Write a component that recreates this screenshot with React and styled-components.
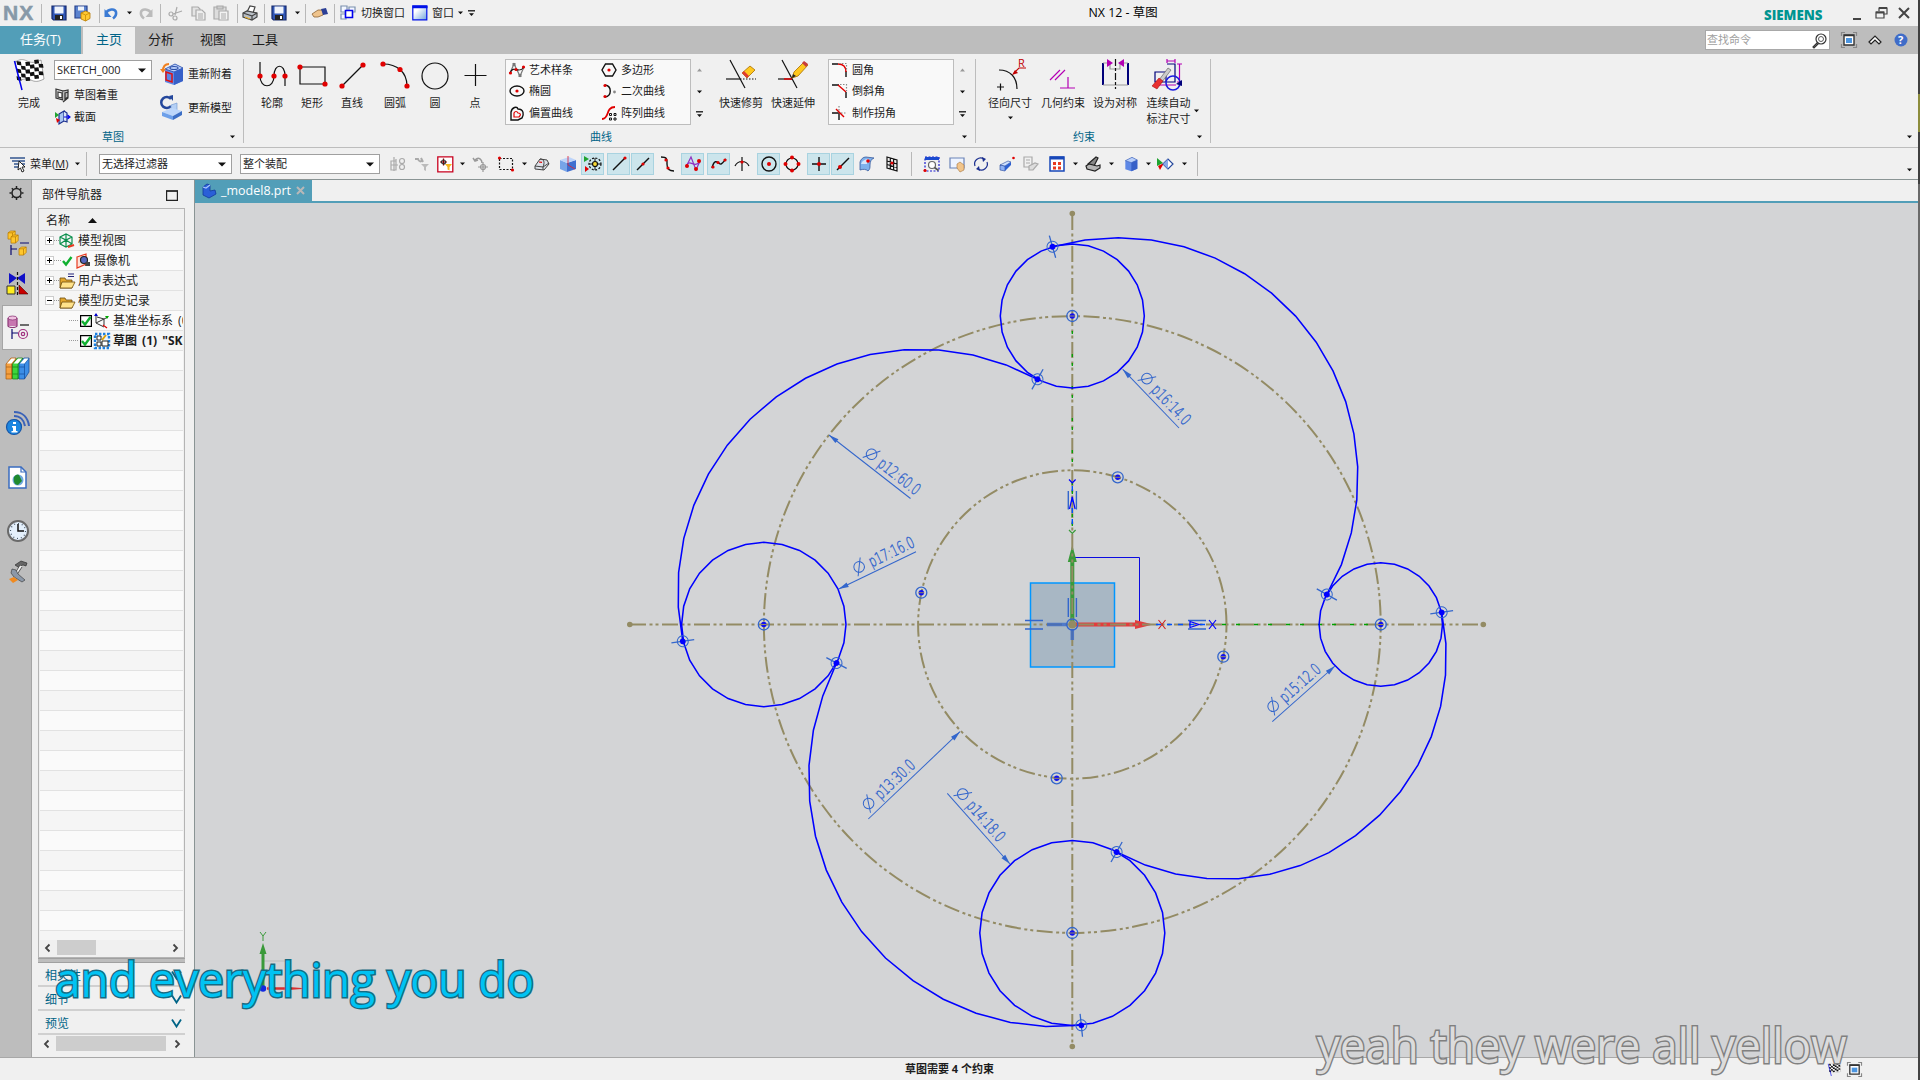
import React from "react";
import styled, { createGlobalStyle, css } from "styled-components";

const Global = createGlobalStyle`
  * { box-sizing: border-box; }
  body { margin: 0; overflow: hidden; background: #f0f0f0; }
`;

const C = {
  bg: "#f0f0f0",
  gray: "#bdbdbd",
  teal: "#529eb8",
  link: "#006487",
  canvas: "#d3d4d6",
  khaki: "#938b64",
  line: "#0000ff",
  dim: "#3366cc",
};

/* ---------- frame ---------- */
const Window = styled.div`
  width: 1920px;
  height: 1080px;
  display: flex;
  background: ${C.bg};
  color: #1c1c1c;
  font: 11px/16px "Open Sans", "Noto Sans CJK SC", sans-serif;
  overflow: hidden;
  position: relative;
  white-space: nowrap;
`;
const Main = styled.div`
  width: 1918px;
  display: flex;
  flex-direction: column;
`;
const Edge = styled.div`
  width: 2px;
  background: linear-gradient(#404040 94px, #8c8c3c 94px 132px, #404040 132px 184px, #6a6a6a 184px 300px, #444 300px);
`;
const Slot = styled.div`
  width: ${(p) => p.$w || 24}px;
  height: ${(p) => p.$h || 24}px;
  margin-left: ${(p) => p.$gap || 0}px;
  display: flex;
  flex: none;
  align-items: center;
  justify-content: center;
  ${(p) => p.$on && css`background: #cce5ec; border: 1px solid #a9d3e0;`}
`;
const Sep = styled.div`
  width: 1px;
  height: ${(p) => p.$h || 19}px;
  margin-left: ${(p) => p.$gap || 0}px;
  background: #b8b8b8;
  flex: none;
`;
const Label = styled.span`
  width: ${(p) => (p.$w ? p.$w + "px" : "auto")};
  margin-left: ${(p) => p.$gap || 0}px;
  flex: none;
`;
const Draw = styled.svg`
  display: block;
  flex: none;
  overflow: visible;
  fill: none;
  stroke-width: 1.2;
`;
const I = ({ w = 16, h = w, vb, children, ...r }) => (
  <Draw width={w} height={h} viewBox={vb || `0 0 ${w} ${h}`} {...r}>{children}</Draw>
);
const Caret = ({ color = "#111", bar }) => (
  <I w={7} h={bar ? 7 : 4}>
    {bar && <path d="M0 .8h7" stroke={color} strokeWidth="1.3" />}
    <path d={bar ? "M1 3.200h5L3.500 6z" : "M1 .5h5L3.500 3.300z"} fill={color} />
  </I>
);
const Drop = ({ gap, bar }) => <Slot $w={10} $gap={gap}><Caret bar={bar} /></Slot>;
const Dots = ({ at, r = 1.6 }) => at.map(([x, y], i) => <circle key={i} cx={x} cy={y} r={r} fill="#e00000" stroke="none" />);

/* ---------- icons ---------- */
const Save = () => (
  <I><path d="M1 1h14v14H2.500L1 13.500z" fill="#2f55b5" stroke="#15286b" /><path d="M3.500 1.500h9v7h-9z" fill="#eef3fb" /><path d="M4 10h8v5H4z" fill="#222" /><path d="M9 11h2v3H9z" fill="#fff" /></I>
);
const SaveAs = () => (
  <I><path d="M1 1h12v12H1z" fill="#5b83cf" stroke="#27418c" /><path d="M4 1.500h6v4H4z" fill="#eef3fb" /><path d="M7 8l4.500-2L16 8v5.500L11.500 16 7 14z" fill="#ffc933" stroke="#b87a00" strokeWidth=".8" /><path d="M7 8l4.500 2L16 8M11.500 10v6" stroke="#c98b00" strokeWidth=".8" /></I>
);
const Undo = ({ flip, color = "#3b7bd4" }) => (
  <I><g transform={flip ? "translate(16) scale(-1 1)" : undefined}><path d="M3 8c2-4 9-5 10-1 .6 3-1 5-3 6.500" stroke={color} strokeWidth="2.600" /><path d="M1.500 4v8h7z" fill={color} /></g></I>
);
const Cut = () => (
  <I stroke="#aaa" strokeWidth="1.500"><path d="M10 2L8 10M15 6L6 9" /><circle cx="4" cy="9" r="2" /><circle cx="8" cy="13" r="2" /></I>
);
const Copy = () => (
  <I stroke="#aaa"><path d="M2 2h6l2 2v7H2z" fill="#e4e4e4" /><path d="M6 5h6l3 3v7H6z" fill="#eee" /><path d="M8 9h5M8 11h5M8 13h5" /></I>
);
const Paste = () => (
  <I stroke="#aaa"><path d="M1 2h12v12H1z" fill="#ddd" /><path d="M4 1h6v3H4z" fill="#ccc" /><path d="M6 6h9v9H6z" fill="#f2f2f2" /><path d="M8 9h5M8 11h5M8 13h5" /></I>
);
const Print = () => (
  <I stroke="#444" strokeWidth="1"><path d="M5 7l3-6 5 1-2 6z" fill="#fff" /><path d="M1 8l4-2 10 2v4l-5 3-9-3z" fill="#b9bfc6" /><path d="M1 8l9 3v4M10 11l5-3" /><path d="M3 12l5 2" stroke="#e8b030" /></I>
);
const Hand = () => (
  <I><path d="M0 9l6-4 6 0-1 5-5 2-4 0z" fill="#efc48d" stroke="#8d6334" strokeWidth=".8" /><path d="M9 4l5-1 2 6-5 1z" fill="#2b3f96" /></I>
);
const Switch = () => (
  <I><path d="M1 1h6v6H1zM9 2h6v5H9zM1 9h5v5H1z" stroke="#7a8fae" fill="#f4f8ff" /><path d="M5.500 5.500h7v7h-7z" stroke="#0000ee" strokeWidth="1.600" fill="#fff" /></I>
);
const WinIcon = () => (
  <I><defs><linearGradient id="wn" x1="0" y1="0" x2="1" y2="1"><stop offset=".3" stopColor="#fff" /><stop offset="1" stopColor="#6fa3dd" /></linearGradient></defs><path d="M.8.8h14v14H.8z" fill="url(#wn)" stroke="#0011e8" /><path d="M.5 2h15" stroke="#0011e8" strokeWidth="2.500" /></I>
);
const Frame = ({ w = 16 }) => (
  <I w={w} vb="0 0 16 16"><path d="M.5 4V.5H4M12 .5h3.500V4M15.500 12v3.500H12M4 15.500H.5V12" stroke="#888" /><path d="M3 3h10v10H3z" fill="#fff" stroke="#333" strokeWidth="1.400" /><path d="M3 3.500h10" stroke="#333" strokeWidth="1.500" /><path d="M5 6h6v5H5z" fill="#4b95e0" /></I>
);
const Flag = ({ w = 31 }) => {
  const sq = [];
  for (let r = 0; r < 5; r++) for (let c = 0; c < 6; c++) if ((r + c) % 2 === 0) sq.push(`M${2 + c * 4.4} ${3 + r * 3.8 + Math.sin(c) * 1.2}l4.400 ${Math.cos(c) * 0.8}l.6 3.800l-4.400 ${-Math.cos(c) * 0.8}z`);
  return (
    <I w={w} vb="0 0 31 31">
      <path d="M1 3c5-3 8-3 12-1s8 2 14-1l3 19c-6 3-9 3-13 1s-8-1-12 1z" fill="#fff" stroke="#555" strokeWidth=".5" />
      <path d={sq.join("")} fill="#111" transform="translate(.5 -1)" />
      <path d="M.5 2l7.500 29" stroke="#0000ee" strokeWidth="1.500" />
    </I>
  );
};
const Emphasis = () => (
  <I stroke="#333" strokeWidth="1"><path d="M2 2l7 2v9l-7-2z" fill="#ddd" /><path d="M4 5l4 1v5l-4-1z" fill="#fff" /><path d="M9 4l5-1v8l-5 4M11 6l3-1v5l-3 2z" fill="#bbb" /></I>
);
const Section = () => (
  <I><path d="M5 5l5-3v10l-5 3z" fill="#a8c4f0" stroke="#1b2f8f" /><path d="M10 2l3 2v9l-3-1" stroke="#1b2f8f" fill="#d9e5fa" /><path d="M10 8h6M13.500 6l2.500 2-2.500 2" stroke="#0000ee" /><path d="M1 3l4 3-4 3z" fill="#1fa32f" /><path d="M2 9l4 2-3 3z" fill="#e00000" /></I>
);
const Cube = ({ w = 24, hook }) => (
  <I w={w} vb="0 0 24 24"><path d="M5 7l10-5 8 4v13l-9 4-9-3z" fill="#5e88e6" /><path d="M5 7l9 3 9-4-8-4z" fill="#b9cffa" stroke="#2c4fa8" strokeWidth=".8" /><path d="M14 10v13l9-4V6z" fill="#3760c8" />
    {hook && <><path d="M6 10l6 2v8l-6-2z" stroke="#e01010" strokeWidth="1.500" /><path d="M9 2C5 2 3 5 3 9" stroke="#f08020" strokeWidth="2" /><path d="M0 7l3 4 3-4z" fill="#f08020" /><ellipse cx="14" cy="6" rx="4" ry="1.500" stroke="#2c4fa8" /></>}
  </I>
);
const Update = () => (
  <I w={24} h={25}><path d="M12 5A5.500 5.500 0 1 0 12 12" stroke="#24479c" strokeWidth="2.500" transform="translate(-1 -1)" /><path d="M9 1l4-1v6z" fill="#24479c" /><path d="M11 10l6-2v8l-6 3z" fill="#b5d0f5" stroke="#6d94ce" strokeWidth=".6" /><path d="M2 17l10-4 10 3-9 5z" fill="#bcd6fb" /><path d="M2 17l11 4v4L2 21z" fill="#6da0ea" /><path d="M13 21l9-5v4l-9 5z" fill="#3c6fc6" /></I>
);
const K = "#111";
const Profile = () => <I w={28} h={28}><path d="M2 1v14c0 13 14 13 14 0S27 2 27 15v10" stroke={K} /><Dots r={2.6} at={[[2, 15], [16, 15], [27, 15]]} /></I>;
const Rect = () => <I w={28} h={28}><path d="M2 6h25v17H2z" stroke={K} /><Dots r={2.6} at={[[2, 6], [27, 23]]} /></I>;
const Line = () => <I w={28} h={28}><path d="M4 25L25 4" stroke={K} /><Dots r={2.6} at={[[4, 25], [25, 4]]} /></I>;
const Arc = () => <I w={28} h={28}><path d="M2 3c14 0 24 8 24 22" stroke={K} /><Dots r={2.6} at={[[2, 3], [19, 8.5], [26, 25]]} /></I>;
const Circ = () => <I w={28} h={28}><circle cx="14" cy="15" r="13" stroke={K} /></I>;
const Plus = () => <I w={28} h={28}><path d="M14.500 3v22M3.500 14.500h22" stroke={K} /></I>;
const Trim = ({ pencil }) => (
  <I w={30} h={30}>
    <path d="M4 1l15 28" stroke={K} /><path d="M0 20h14" stroke={K} />
    {pencil ? <><path d="M6 20h8" stroke="#e00000" strokeWidth="1.500" /><path d="M14 19l2-6L26 3l4 3-10 11z" fill="#ffc81e" stroke="#a86d00" strokeWidth=".8" /><path d="M24 4l2-2 4 3-2 3z" fill="#c83c3c" /><path d="M14 19l1-4 3 2z" fill="#222" /></>
      : <><path d="M14 20h16" stroke={K} strokeDasharray="1.500 1.500" /><path d="M16 14l8-7 5 4-8 8z" fill="#ffc81e" stroke="#a86d00" strokeWidth=".8" /><path d="M16 14l2-2 5 5-2 2z" fill="#e03a30" /></>}
  </I>
);
const Art = ({ c = "#777" }) => <I><path d="M1 11L5 2l6 12 4-9" stroke={c} /><path d="M1 11c4-9 8 2 14-6" stroke={K} /><path d="M3.500 1h3v3h-3zM9.500 12h3v3h-3z" fill={c} /><Dots at={[[1.5, 11], [7, 7.5], [14.5, 5]]} /></I>;
const Poly = () => <I><path d="M4.500 2h7L15 8l-3.500 6h-7L1 8z" stroke={K} strokeWidth="1.400" /><Dots at={[[8, 8]]} /></I>;
const Ellipse = () => <I><ellipse cx="8" cy="8" rx="7" ry="5" stroke={K} strokeWidth="1.400" /><Dots at={[[8, 8]]} /></I>;
const Conic = () => <I><path d="M4 2c7 1 7 11 0 12" stroke={K} strokeWidth="1.400" /><circle cx="13.500" cy="9" r="1.400" fill="#888" /><Dots at={[[4, 2.5], [4, 13.5]]} /></I>;
const Offset = () => <I><path d="M2 14V7c1-5 6-6 7-3 6 0 6 6 4 9l-4 2H2z" stroke={K} strokeWidth="1.400" /><path d="M5 12V8c1-2 3-2 4 0 3 0 3 2 1 4z" stroke="#e00000" /></I>;
const Pattern = () => <I><path d="M1 14c8 0 3-12 13-12" stroke="#e00000" strokeWidth="1.800" /><path d="M8.500 8.500h2v2h-2zM13 8.500h2v2h-2zM8.500 13h2v2h-2zM13 13h2v2h-2z" stroke={K} strokeWidth="1" /></I>;
const Fillet = () => <I><path d="M0 2h6M14 9v6" stroke={K} strokeWidth="1.400" /><path d="M6 2c5 0 8 3 8 8" stroke="#e00000" strokeWidth="1.400" /><path d="M7 1.500h7.500V8" stroke="#888" strokeDasharray="1.500 1.500" /></I>;
const Chamfer = () => <I><path d="M0 2h7M14 9v6" stroke={K} strokeWidth="1.400" /><path d="M6 2l8 7" stroke="#e00000" strokeWidth="1.400" /><path d="M8 1.500h6.500V8" stroke="#888" strokeDasharray="1.500 1.500" /></I>;
const Corner = () => <I><path d="M0 8h7v7" stroke={K} strokeWidth="1.400" /><path d="M7 1v7h8" stroke="#888" strokeDasharray="1.500 1.500" /><path d="M4 4l8 8" stroke="#e00000" strokeWidth="1.400" /></I>;
const SvgText = styled.text`
  font: ${(p) => p.$w || 400} ${(p) => p.$s}px "Open Sans", sans-serif;
  fill: ${(p) => p.$c};
  stroke: none;
`;
const Radial = () => <I w={32} h={31}><path d="M5 11c11 0 18 7 18 19" stroke={K} /><path d="M3 28h7M6.500 24.500v7" stroke={K} /><path d="M32 9h-7l-5 5" stroke="#c00000" /><path d="M18 16l6-2-3-3z" fill="#c00000" /><SvgText $s={11} $c="#c00000" x="24" y="8">R</SvgText></I>;
const Geo = () => <I w={28} h={30} stroke="#b400b4"><path d="M1 21L11 11M6 21L16 11M11 29h15M19 18v11" /></I>;
const Mirror = () => <I w={28} h={30}><path d="M2 4v22M27 4v22" stroke="#00007a" strokeWidth="2" /><path d="M2 26h25M9 4v6h10V4M2 4h7M19 4h8" stroke="#999" /><path d="M14.500 0v30" stroke={K} strokeDasharray="7 2 3 2" /><path d="M6 0l6 4-6 4zM23 0l-6 4 6 4z" fill="#b400b4" /></I>;
const AutoDim = () => <I w={32} h={31}><path d="M4 13h11v10H4zM16 5h8v18h-9" stroke="#00007a" /><path d="M16 0v4M24 0v4M16 2h8M26 5h5M28.500 5v18M26 23h5M5 26h20" stroke="#b400b4" /><circle cx="22" cy="24" r="7" stroke="#1a1ae0" strokeWidth="1.600" /><path d="M25 25l6-4v6z" fill="#00007a" /><path d="M8 21L17 9l3 2-9 12z" fill="#ccc" stroke="#555" strokeWidth=".6" /><path d="M1 27l7-8 4 3-6 8z" fill="#e83030" stroke="#900" strokeWidth=".5" /></I>;
const Seven = ({ c = "#aaa" }) => <I stroke={c}><path d="M1 5h5v9H1zM6 3v11M4 1v14M1 9h7" /><circle cx="12" cy="5" r="2.500" /><circle cx="12" cy="11" r="2.500" /></I>;
const BackFilter = () => <I><path d="M1 3h3c1 3 3 3 4 1M7 2l2 4" stroke="#aaa" strokeWidth="2" /><path d="M7 8h8l-3 3v4l-2-1v-3z" fill="#bbb" /></I>;
const RedFilter = () => <I w={17}><path d="M.8.8h15v15h-15z" fill="#fff" stroke="#c8001e" strokeWidth="1.300" /><path d="M3 6h7M6.500 2.500v7" stroke="#800" /><circle cx="6.500" cy="6" r="2" stroke="#333" /><path d="M8 8h7l-2.500 3v3.500l-2-1V11z" fill="#f5b820" /></I>;
const Restore = () => <I stroke="#999"><path d="M3 4c4-4 7 0 7 3M1 2l2 3 3-1" strokeWidth="1.500" /><path d="M6 11h10M11 6v10" /><circle cx="11" cy="11" r="2.500" /></I>;
const Select = () => <I><path d="M1.500 2.500h13v11h-13z" stroke={K} strokeDasharray="2 1.500" /><Dots at={[[1.5, 2], [14.5, 14]]} /></I>;
const SolidGray = () => <I><path d="M1 10l5-7 7 1 2 4-5 6-9-1z" fill="#dde1e8" stroke="#444" strokeWidth="1" /><path d="M1 10l8 1 6-4M9 11v3M6 3c4 0 5 3 3 8" stroke="#444" strokeWidth="1" /><path d="M5 6l3 .4" stroke="#e00000" /></I>;
const ShadedCube = () => <I><path d="M0 4l7 3v9l-7-3z" fill="#77a4e8" /><path d="M7 7l9-3v9l-9 3z" fill="#3f6fd0" /><path d="M0 4l9-3 7 3-9 3z" fill="#bdd4fa" /><path d="M8 0v9M8 9l7 4" stroke="#e02030" strokeWidth=".8" /></I>;
const Compass = () => <I w={18}><circle cx="11" cy="9" r="6" stroke={K} strokeDasharray="2 1.500" /><path d="M11 3v12M5 9h12" stroke={K} strokeWidth="1" /><circle cx="11" cy="9" r="2.500" fill="#f6d835" stroke={K} /><path d="M0 1l5 3-5 3z" fill="#1fa32f" /><path d="M1 11l4 3-4 3z" fill="#e00000" /></I>;
const EndPt = () => <I><path d="M2 14L14 2" stroke={K} strokeWidth="1.400" /><Dots at={[[14, 2]]} /></I>;
const MidPt = () => <I><path d="M2 14L14 2" stroke={K} strokeWidth="1.400" /><Dots at={[[8, 8]]} /></I>;
const Ctrl = () => <I><path d="M1 1c7 0 6 3 6 7s1 7 7 7" stroke={K} strokeWidth="1.400" /><Dots at={[[6, 4], [8, 12]]} /></I>;
const Art2 = () => <I><path d="M1 11L6 1l5 13 4-9" stroke="#9030c0" /><path d="M1 10c4-8 8 3 14-4" stroke="#9030c0" /><Dots r={2} at={[[2, 10], [11, 13], [14, 5]]} /></I>;
const Spl = () => <I><path d="M1 12c3-12 7-3 9-4s3-3 5-5" stroke={K} strokeWidth="1.400" /><Dots at={[[2, 11], [7, 6.5], [14, 4]]} /></I>;
const Cross = () => <I><path d="M1 10c3-6 11-6 14 0M8 1v14" stroke={K} /><Dots at={[[8, 6]]} /></I>;
const CenterI = () => <I><circle cx="8" cy="8" r="7" stroke={K} strokeWidth="1.400" /><Dots r={2} at={[[8, 8]]} /></I>;
const Quad = () => <I><circle cx="8" cy="8" r="6" stroke={K} /><Dots r={2} at={[[8, 1.5], [8, 14.5], [1.5, 8], [14.5, 8]]} /></I>;
const Exist = () => <I><path d="M8 1v14M1 8h14" stroke={K} strokeWidth="1.400" /><Dots r={2} at={[[8, 8]]} /></I>;
const OnCurve = () => <I><path d="M2 14L14 2" stroke={K} strokeWidth="1.400" /><Dots r={2} at={[[5, 11]]} /></I>;
const Face = () => <I><path d="M1 6c1-3 3-5 6-5l8 1c-3 1-4 4-4 7 0 3 0 4-2 6-2-2-5-2-8-1z" fill="#7fb1ec" stroke="#35589c" strokeWidth=".8" /><path d="M2 8c1-3 4-5 8-5-1 1-2 3-2 5z" fill="#d5e6fb" /><Dots r={1.8} at={[[9, 5]]} /></I>;
const Grid = () => <I><path d="M3 1l10 3v11L3 12zM6.300 2v11M9.600 3v11M3 5l10 3M3 8.500l10 3" stroke={K} /><Dots at={[[8, 7]]} /></I>;
const Fit = () => <I><path d="M1 1h14v14H1z" stroke="#1a1ad0" strokeDasharray="2 1.500" /><path d="M1 2.500h14" stroke="#1a4ad0" strokeWidth="3" /><circle cx="8" cy="9" r="3.500" fill="#fff" stroke="#666" /><path d="M10.500 11.500l4 3" stroke="#555" strokeWidth="1.600" /><Dots at={[[1, 14.5]]} /></I>;
const Pan = () => <I><path d="M1 2h14v10H1z" fill="#eef4ff" stroke="#6b83b8" /><path d="M8 8l3-2 4 3v5l-4 2-3-4z" fill="#f2c58b" stroke="#a5743c" strokeWidth=".6" /></I>;
const Rotate = () => <I stroke="#1b2f8f" strokeWidth="1.800"><path d="M2 10a6 6 0 0 1 9-7M14 6a6 6 0 0 1-9 7" /><path d="M9 1l4 2-3 3zM7 15l-4-2 3-3z" fill="#1b2f8f" stroke="none" /></I>;
const Persp = () => <I><path d="M1 9l5 1v5l-5-1z" fill="#8db0f5" stroke="#24479c" strokeWidth=".6" /><path d="M1 9l8-4 3 1-6 4z" fill="#cfe0fd" stroke="#24479c" strokeWidth=".6" /><path d="M6 10l6-4v3l-6 6z" fill="#2c5fd0" /><Dots r={1.3} at={[[14.5, 2]]} /></I>;
const Docs = () => <I stroke="#aaa"><path d="M1 1h8v10H1z" /><path d="M3 4h4M3 7h4M6 10l6-3 3 1-5 6H6z" fill="#ddd" /></I>;
const Expand = () => <I><path d="M1 1h14v14H1z" fill="#fff" stroke="#1747b8" strokeWidth="1.500" /><path d="M1 2h14" stroke="#1747b8" strokeWidth="3" /><path d="M4 6h3v3H4zM9 6h3v3H9zM4 10.500h3v3H4zM9 10.500h3v3H9z" fill="#e83a20" /></I>;
const Shade = () => <I><path d="M3 8l8-7 2 1-4 8z" fill="#888" stroke="#222" /><path d="M1 10l3-2 8 2 3-1v3l-5 3-8-2z" fill="#b5b5b5" stroke="#222" /></I>;
const Hide = () => <I><path d="M0 2l6 5-6 3z" fill="#1fa32f" /><path d="M1 10l6-3-4 7z" fill="#e00000" /><path d="M6 8l5-5 5 5-5 5z" fill="#fff" stroke="#24479c" /><path d="M6 8l5-5v10z" fill="#88a9e8" /></I>;
const MenuI = () => <I w={17}><path d="M0 2h15M2 5h13M4 8h11M4 11h8" stroke="#33558f" strokeWidth="1.500" /><path d="M9 5l6 6-3 0 2 4-2 1-1.500-4L8 14z" fill="#fff" stroke={K} strokeWidth=".9" /></I>;

/* ---------- title bar ---------- */
const TitleBar = styled.header`
  height: 26px;
  flex: none;
  display: flex;
  align-items: center;
  background: ${C.bg};
`;
const Brand = styled.span`
  width: 38px;
  padding-left: 3px;
  font: 700 21px/26px "Liberation Sans", sans-serif;
  letter-spacing: 1px;
  color: #8799a8;
  -webkit-text-stroke: 0.5px #8799a8;
`;
const Caption = styled.h1`
  width: 400px;
  margin: 0 0 0 447px;
  text-align: center;
  font-size: 12.4px;
  line-height: 22px;
  height: 22px;
  font-weight: 400;
  color: #000;
`;
const Siemens = styled.b`
  width: 65px;
  margin: 3px 0 0 441px;
  color: #009490;
  font: 800 13.3px/16px "Open Sans", sans-serif;
`;

/* ---------- tabs ---------- */
const Tabs = styled.nav`
  height: 28px;
  flex: none;
  display: flex;
  align-items: center;
  background: ${C.gray};
  font-size: 13px;
`;
const Tab = styled.div`
  width: ${(p) => p.$w}px;
  height: 28px;
  line-height: 26px;
  text-align: center;
  ${(p) => p.$task && css`background: ${C.teal}; color: #fff; margin-right: 2px;`}
  ${(p) => p.$active && css`background: ${C.bg}; color: ${C.link}; height: 27px; margin-top: 1px; line-height: 25px;`}
`;
const Search = styled.div`
  width: 125px;
  height: 20px;
  margin-left: 1414px;
  border: 1px solid #a8a8a8;
  background: #fff;
  color: #a0a0a0;
  font-size: 11px;
  display: flex;
  align-items: center;
  justify-content: space-between;
  padding: 0 2px 0 1px;
`;

/* ---------- ribbon ---------- */
const Ribbon = styled.section`
  height: 94px;
  flex: none;
  display: flex;
  border-bottom: 1px solid ${C.gray};
`;
const Group = styled.div`
  width: ${(p) => p.$w}px;
  height: 84px;
  margin-top: 5px;
  border-right: 1px solid ${C.gray};
  display: flex;
  flex-direction: column;
`;
const GroupBody = styled.div`
  height: 70px;
  flex: none;
  display: flex;
  padding-left: ${(p) => p.$pl || 0}px;
`;
const GroupFoot = styled.div`
  display: flex;
  flex: none;
  height: 16px;
  align-items: center;
  color: ${C.link};
  padding: 0 7px 0 ${(p) => p.$pl}px;
  justify-content: space-between;
`;
const Big = styled.div`
  width: ${(p) => p.$w || 44}px;
  margin-left: ${(p) => p.$gap || 0}px;
  display: flex;
  flex: none;
  flex-direction: column;
  align-items: center;
  line-height: 16px;
`;
const BigIcon = styled.div`
  height: 36px;
  display: flex;
  flex: none;
  align-items: ${(p) => (p.$top ? "flex-start" : "center")};
  padding-bottom: ${(p) => (p.$top ? 0 : 5)}px;
`;
const Stack = styled.div`
  display: flex;
  flex-direction: column;
  margin-left: ${(p) => p.$gap || 0}px;
  width: ${(p) => p.$w}px;
  padding-top: ${(p) => p.$pt || 0}px;
`;
const Row = styled.div`
  height: ${(p) => p.$h || 20}px;
  display: flex;
  align-items: center;
  gap: ${(p) => p.$g || 4}px;
`;
const Shift = styled.span`
  margin-left: -20px;
`;
const Combo = styled.div`
  width: ${(p) => p.$w}px;
  height: 20px;
  flex: none;
  margin-left: ${(p) => p.$gap || 0}px;
  border: 1px solid #a0a0a0;
  background: #fff;
  display: flex;
  align-items: center;
  justify-content: space-between;
  padding: 0 5px 0 2px;
`;
const Gallery = styled.div`
  width: ${(p) => p.$w}px;
  height: 66px;
  flex: none;
  margin-left: ${(p) => p.$gap || 0}px;
  border: 1px solid ${C.gray};
  background: #f9f9f9;
  display: grid;
  grid-template-columns: ${(p) => p.$cols};
  grid-template-rows: 20px 22px 22px;
  align-items: center;
  padding-left: 3px;
`;
const Pager = styled.div`
  width: 16px;
  height: 66px;
  flex: none;
  display: grid;
  grid-template-rows: repeat(3, 22px);
  place-items: center;
`;
const ComboCaret = () => <I w={8} h={5}><path d="M0 .5h8L4 4.500z" fill={K} /></I>;
const GalleryPager = () => (
  <Pager>
    <I w={7} h={4}><path d="M1 3.500h5L3.500 .5z" fill="#999" /></I>
    <Caret />
    <Caret bar />
  </Pager>
);
const Item = ({ icon, children }) => <Row>{icon}{children}</Row>;
const Tool = ({ icon, w, gap, top, children }) => (
  <Big $w={w} $gap={gap}><BigIcon $top={top}>{icon}</BigIcon>{children}</Big>
);
const RibbonEnd = styled.div`
  flex: 1;
  display: flex;
  justify-content: flex-end;
  align-items: flex-end;
  padding: 0 5px 8px 0;
`;
const AutoCaption = styled.div`
  display: flex;
  align-items: center;
  margin-left: 12px;
  gap: 2px;
`;

/* ---------- selection bar ---------- */
const Bar = styled.section`
  height: 32px;
  flex: none;
  display: flex;
  align-items: center;
  border-bottom: 1px solid #8a9494;
  padding-top: 1px;
`;
const BarEnd = styled.div`
  flex: 1;
  display: flex;
  justify-content: flex-end;
  padding: 12px 5px 0 0;
`;

/* ---------- work area ---------- */
const Work = styled.div`
  height: 878px;
  flex: none;
  display: flex;
  border-bottom: 1px solid #a8a8a8;
`;
const Rail = styled.aside`
  width: 32px;
  background: ${C.gray};
  border-right: 1px solid #a5a5a5;
  display: flex;
  flex-direction: column;
  flex: none;
`;
const RailItem = styled.div`
  height: ${(p) => (p.$active ? 45 : 26)}px;
  width: ${(p) => (p.$active ? 30 : 31)}px;
  margin-top: ${(p) => p.$mt || 0}px;
  margin-left: ${(p) => (p.$active ? 2 : 0)}px;
  padding-left: ${(p) => (p.$active ? 1 : 4)}px;
  display: flex;
  flex: none;
  align-items: center;
  justify-content: center;
  ${(p) => p.$active && css`background: ${C.bg}; border: 1px solid #a5a5a5; border-right: 0; padding-bottom: 2px;`}
`;
const Panel = styled.aside`
  width: 163px;
  flex: none;
  border-right: 1px solid #8a9494;
  padding: 0 9px 0 6px;
  display: flex;
  flex-direction: column;
  font-size: 12px;
`;
const PanelTitle = styled.div`
  height: 28px;
  display: flex;
  align-items: center;
  justify-content: space-between;
  padding: 2px 7px 0 4px;
`;
const TreeBox = styled.div`
  height: 750px;
  border: 1px solid #b4b4b4;
  display: flex;
  flex-direction: column;
  overflow: hidden;
  padding: 0 1px;
`;
const TreeHead = styled.div`
  height: 22px;
  flex: none;
  border-bottom: 1px solid #ccc;
  display: flex;
  align-items: center;
  gap: 18px;
  padding: 2px 0 0 6px;
`;
const TreeRows = styled.div`
  height: 709px;
  overflow: hidden;
  word-spacing: 2px;
`;
const TreeRow = styled.div`
  height: 20px;
  border-bottom: 1px solid #e2e2e2;
  background: ${(p) => (p.$odd ? "#fafafa" : "#f5f5f5")};
  padding-left: ${(p) => p.$pl}px;
  display: flex;
  align-items: center;
  overflow: hidden;
  font-weight: ${(p) => (p.$bold ? 700 : 400)};
`;
const Expander = styled.span`
  width: 9px;
  height: 9px;
  flex: none;
  border: 1px solid #ccc;
  background: #fff;
  display: flex;
  align-items: center;
  justify-content: center;
`;
const Scroll = styled.div`
  height: ${(p) => p.$h || 15}px;
  flex: none;
  display: flex;
  align-items: center;
  padding: 0 ${(p) => p.$pr || 5}px 0 ${(p) => p.$pl || 5}px;
  justify-content: space-between;
`;
const Thumb = styled.div`
  width: ${(p) => p.$w}px;
  height: 15px;
  margin-left: 6px;
  margin-right: auto;
  background: #cdcdcd;
`;
const Splitter = styled.div`
  height: 5px;
  flex: none;
  background: #bdbdbd;
  border: 1px solid #a0a0a0;
  border-width: 1px 0;
`;
const Fold = styled.div`
  height: 24px;
  flex: none;
  color: ${C.link};
  border-bottom: 2px solid #d0d0d0;
  display: flex;
  align-items: center;
  justify-content: space-between;
  padding: 3px 3px 0 7px;
`;
const View = styled.main`
  flex: 1;
  display: flex;
  flex-direction: column;
`;
const DocTabs = styled.div`
  height: 23px;
  flex: none;
  border-bottom: 2px solid ${C.teal};
`;
const DocTab = styled.div`
  width: 117px;
  height: 21px;
  background: ${C.teal};
  color: #fff;
  font-size: 12.5px;
  display: flex;
  align-items: center;
  gap: 5px;
  padding-left: 7px;
`;
const Canvas = styled.div`
  flex: 1;
  background: ${C.canvas};
  overflow: hidden;
`;
const Status = styled.footer`
  height: 22px;
  display: flex;
  align-items: center;
  font-weight: 700;
  padding-left: 905px;
`;
const StatusIcons = styled.div`
  display: flex;
  gap: 6px;
  margin-left: auto;
  padding-right: 56px;
  align-items: center;
`;
const Lyric = styled.div`
  position: absolute;
  left: ${(p) => p.$x}px;
  top: ${(p) => p.$y}px;
  font: ${(p) => p.$wt} 48px/66px "Open Sans", sans-serif;
  transform: scaleX(${(p) => p.$sx});
  transform-origin: left;
  color: ${(p) => p.$c};
  -webkit-text-stroke: 3px ${(p) => p.$s};
  paint-order: stroke fill;
`;

const SaveRow = () => (
  <TitleBar>
    <Brand>NX</Brand><Sep $gap={3} />
    <Slot $w={16} $gap={9}><Save /></Slot><Slot $w={16} $gap={7}><SaveAs /></Slot><Sep $gap={9} />
    <Slot $w={16} $gap={3}><Undo /></Slot><Drop gap={5} /><Slot $w={16} $gap={4}><Undo flip color="#bbb" /></Slot><Sep $gap={6} />
    <Slot $w={16} $gap={6}><Cut /></Slot><Slot $w={16} $gap={7}><Copy /></Slot><Slot $w={16} $gap={7}><Paste /></Slot><Sep $gap={8} />
    <Slot $w={16} $gap={4}><Print /></Slot><Sep $gap={6} />
    <Slot $w={16} $gap={6}><Save /></Slot><Drop gap={5} /><Sep $gap={3} />
    <Slot $w={16} $gap={6}><Hand /></Slot><Sep $gap={6} />
    <Slot $w={16} $gap={5}><Switch /></Slot><Label $gap={5} $w={44}>切换窗口</Label>
    <Slot $w={16} $gap={7}><WinIcon /></Slot><Label $gap={4} $w={22}>窗口</Label>
    <Drop gap={1} /><Drop gap={1} bar />
    <Caption>NX 12 - 草图</Caption>
    <Siemens>SIEMENS</Siemens>
    <Slot $w={10} $gap={23}><I w={10} h={14}><path d="M1 13h8" stroke="#444" strokeWidth="2" /></I></Slot>
    <Slot $w={14} $gap={12}><I w={14} h={14}><path d="M5 5V2h8v6H9M2 6h8v6H2z" stroke="#444" strokeWidth="1.200" /><path d="M5 2h8M2 6.500h8" stroke="#444" strokeWidth="2" /></I></Slot>
    <Slot $w={12} $gap={10}><I w={12} h={12}><path d="M1 1l10 10M11 1L1 11" stroke="#444" strokeWidth="2" /></I></Slot>
  </TitleBar>
);

const TabRow = () => (
  <Tabs>
    <Tab $w={81} $task>任务(T)</Tab><Tab $w={52} $active>主页</Tab><Tab $w={52}>分析</Tab><Tab $w={52}>视图</Tab><Tab $w={52}>工具</Tab>
    <Search>查找命令<I w={15}><circle cx="9" cy="6" r="5" stroke="#333" /><circle cx="9" cy="6" r="2.500" stroke="#333" strokeWidth=".8" /><path d="M5.500 9.500L1 14l1 1 4.500-4.500" stroke="#333" /></I></Search>
    <Slot $w={16} $gap={11}><Frame /></Slot>
    <Slot $w={16} $gap={10}><I w={14} h={12}><path d="M1 8l6-6 6 6-2 2-4-4-4 4z" fill="#fff" stroke="#222" /></I></Slot>
    <Slot $w={16} $gap={10}><I w={14}><circle cx="7" cy="7" r="6.500" fill="#3f6cc8" /><SvgText $s={11} $w={700} $c="#fff" x="4" y="11">?</SvgText></I></Slot>
  </Tabs>
);

const RibbonRow = () => (
  <Ribbon>
    <Group $w={244}>
      <GroupBody $pl={7}>
        <Tool icon={<Flag />} top>完成</Tool>
        <Stack $w={98} $gap={3} $pt={1}>
          <Combo $w={98}>SKETCH_000<ComboCaret /></Combo>
          <Row $h={29}><I w={16} /><Shift><Emphasis /></Shift>草图着重</Row>
          <Row $h={15}><I w={16} /><Shift><Section /></Shift>截面</Row>
        </Stack>
        <Stack $w={74} $gap={8}>
          <Row $h={30}><Cube hook />重新附着</Row>
          <Row $h={37}><Update />更新模型</Row>
        </Stack>
      </GroupBody>
      <GroupFoot $pl={102}>草图<Caret /></GroupFoot>
    </Group>
    <Group $w={732}>
      <GroupBody>
        <Tool w={40} gap={8} icon={<Profile />}>轮廓</Tool><Tool w={40} icon={<Rect />}>矩形</Tool><Tool w={40} icon={<Line />}>直线</Tool>
        <Tool w={46} icon={<Arc />}>圆弧</Tool><Tool w={34} icon={<Circ />}>圆</Tool><Tool w={46} icon={<Plus />}>点</Tool>
        <Gallery $w={186} $gap={7} $cols="92px 90px">
          <Item icon={<Art />}>艺术样条</Item><Item icon={<Poly />}>多边形</Item>
          <Item icon={<Ellipse />}>椭圆</Item><Item icon={<Conic />}>二次曲线</Item>
          <Item icon={<Offset />}>偏置曲线</Item><Item icon={<Pattern />}>阵列曲线</Item>
        </Gallery>
        <GalleryPager />
        <Tool w={52} gap={8} top icon={<Trim />}>快速修剪</Tool><Tool w={52} top icon={<Trim pencil />}>快速延伸</Tool>
        <Gallery $w={126} $gap={9} $cols="120px">
          <Item icon={<Fillet />}>圆角</Item><Item icon={<Chamfer />}>倒斜角</Item><Item icon={<Corner />}>制作拐角</Item>
        </Gallery>
        <GalleryPager />
      </GroupBody>
      <GroupFoot $pl={346}>曲线<Caret /></GroupFoot>
    </Group>
    <Group $w={235}>
      <GroupBody>
        <Tool w={52} gap={8} top icon={<Radial />}><RadialCaption>径向尺寸<Caret /></RadialCaption></Tool>
        <Tool w={52} gap={1} top icon={<Geo />}>几何约束</Tool><Tool w={52} top icon={<Mirror />}>设为对称</Tool>
        <Tool w={52} top icon={<AutoDim />}><AutoCaption><span>连续自动<br />标注尺寸</span><Caret /></AutoCaption></Tool>
      </GroupBody>
      <GroupFoot $pl={97}>约束<Caret /></GroupFoot>
    </Group>
    <RibbonEnd><Caret /></RibbonEnd>
  </Ribbon>
);
const RadialCaption = styled.span`
  display: flex;
  flex-direction: column;
  align-items: center;
  gap: 5px;
`;

const SelectionBar = () => (
  <Bar>
    <Slot $w={17} $gap={10}><MenuI /></Slot><Label $gap={3} $w={42}>菜单(<u>M</u>)</Label><Drop gap={0} /><Sep $h={24} $gap={4} />
    <Combo $w={133} $gap={12}>无选择过滤器<ComboCaret /></Combo>
    <Combo $w={140} $gap={8}>整个装配<ComboCaret /></Combo>
    <Slot $gap={6}><Seven /></Slot><Slot><BackFilter /></Slot><Slot $w={23}><RedFilter /></Slot><Drop />
    <Slot $gap={1}><Restore /></Slot><Slot $gap={2}><Select /></Slot><Drop gap={1} />
    <Slot $gap={1}><SolidGray /></Slot><Slot $gap={2}><ShadedCube /></Slot>
    <Slot $w={23} $h={22} $on $gap={1}><Compass /></Slot><Slot $w={23} $h={22} $on $gap={3}><EndPt /></Slot><Slot $w={23} $h={22} $on $gap={1}><MidPt /></Slot>
    <Slot $gap={2}><Ctrl /></Slot><Slot $w={23} $h={22} $on $gap={1}><Art2 /></Slot><Slot $w={23} $h={22} $on $gap={3}><Spl /></Slot>
    <Slot><Cross /></Slot><Slot $w={23} $h={22} $on $gap={3}><CenterI /></Slot><Slot><Quad /></Slot>
    <Slot $w={23} $h={22} $on $gap={3}><Exist /></Slot><Slot $w={23} $h={22} $on $gap={1}><OnCurve /></Slot>
    <Slot $gap={1}><Face /></Slot><Slot $gap={1}><Grid /></Slot><Sep $h={24} $gap={7} />
    <Slot $gap={8}><Fit /></Slot><Slot $gap={1}><Pan /></Slot><Slot><Rotate /></Slot><Slot $gap={2}><Persp /></Slot><Slot><Docs /></Slot>
    <Slot $gap={2}><Expand /></Slot><Drop gap={1} /><Slot $gap={1}><Shade /></Slot><Drop gap={1} />
    <Slot $gap={2}><Cube w={16} /></Slot><Drop gap={1} /><Slot><Hide /></Slot><Drop gap={2} /><Sep $h={24} $gap={8} />
    <BarEnd><Caret /></BarEnd>
  </Bar>
);

const YCube = ({ x, y, s = 1 }) => (
  <g transform={`translate(${x} ${y}) scale(${s})`}><path d="M0 2l3-2h5v6l-3 3H0z" fill="#ffc72e" stroke="#b97c00" strokeWidth=".8" /><path d="M0 2h5v7M5 2l3-2" stroke="#b97c00" strokeWidth=".8" /></g>
);
const Folder = ({ eq }) => (
  <I><path d="M1 5h5l1 2h6v8H1z" fill="#e3a72e" stroke="#6d4c0c" strokeWidth=".8" /><path d="M3 9h13l-3 6H1z" fill="#ffe28a" stroke="#6d4c0c" strokeWidth=".8" />{eq && <path d="M9 1h6M9 3.500h6" stroke="#22227a" />}</I>
);
const Tick = ({ box }) => (
  <I w={12}>{box && <path d="M.6.6h10.800v10.800H.6z" fill="#fff" stroke="#000" />}<path d="M2 6l3 3.500L10.500 2" stroke="#10b030" strokeWidth="2.400" /></I>
);
const Gap = styled.span`
  width: ${(p) => p.$w}px;
  flex: none;
  align-self: center;
  border-top: ${(p) => (p.$dot ? "1px dotted #999" : "0")};
  height: 0;
`;
const Exp = ({ open }) => <Expander><I w={7}><path d={open ? "M1 3.500h5" : "M1 3.500h5M3.500 1v5"} stroke="#000" strokeWidth="1" /></I></Expander>;
const Arrow = ({ right }) => <I w={6} h={8}><path d={right ? "M1.500 .5L5 4 1.500 7.500" : "M4.500 .5L1 4l3.500 3.500"} stroke="#444" strokeWidth="1.800" /></I>;
const Vee = () => <I w={11} h={9}><path d="M1 .5l4.500 7L10 .5" stroke={C.link} strokeWidth="1.800" /></I>;

const Navigator = () => (
  <Panel>
    <PanelTitle>部件导航器<I w={12} h={11}><path d="M.6 1h10.800v9.400H.6z" stroke="#222" strokeWidth="1.200" /><path d="M0 1h12" stroke="#222" strokeWidth="1.500" /></I></PanelTitle>
    <TreeBox>
      <TreeHead>名称<I w={9} h={5}><path d="M0 5h9L4.500 0z" fill="#111" /></I></TreeHead>
      <TreeRows>
        <TreeRow $pl={5}><Exp /><Gap $w={5} $dot /><I><path d="M1 4l6-3 6 3v7l-6 3-6-3zM1 4l6 3 6-3M7 1v13M1 11l6-4 6 4" stroke="#0a8f4c" /><path d="M9 14l6-2" stroke="#e83a20" strokeWidth="2" /></I><Gap $w={3} />模型视图</TreeRow>
        <TreeRow $odd $pl={5}><Exp /><Gap $w={7} $dot /><Tick /><Gap $w={3} /><I w={15}><path d="M1 4l9-3v10l-9 4z" stroke="#e83a20" fill="#fbe3dc" /><circle cx="8" cy="7" r="3.500" fill="#5566c0" stroke="#222" /><path d="M10 9h4v4h-5z" fill="#444" /></I><Gap $w={3} />摄像机</TreeRow>
        <TreeRow $pl={5}><Exp /><Gap $w={5} $dot /><Folder eq /><Gap $w={3} />用户表达式</TreeRow>
        <TreeRow $pl={5}><Exp open /><Gap $w={5} $dot /><Folder /><Gap $w={3} />模型历史记录</TreeRow>
        <TreeRow $odd $pl={29}><Gap $w={9} $dot /><Gap $w={2} /><Tick box /><Gap $w={2} /><I><path d="M2 1v9l8 4M2 10l12-6M3 4l7 2v6" stroke="#333" strokeWidth="1" /><path d="M0 3l2-3 2 3z" fill="#00c" /><path d="M11 3l4 0-2 3z" fill="#0a0" /><path d="M9 12l4 3" stroke="#d00" /></I><Gap $w={3} />基准坐标系 (0)</TreeRow>
        <TreeRow $bold $pl={29}><Gap $w={9} $dot /><Gap $w={2} /><Tick box /><Gap $w={2} /><I><path d="M1 1h14v14H1z" stroke="#1c7fe0" strokeWidth="2.400" strokeDasharray="2.400 1.600" fill="#e9f3fd" /><path d="M3 3h4v4H3zM3 9h4v4H3zM8 8h6v5H8z" stroke="#222" strokeWidth="1" fill="#fff" /><path d="M8 7l4-5" stroke="#e0a000" strokeWidth="2" /></I><Gap $w={3} />草图 (1) "SKETCH_000"</TreeRow>
        {Array.from({ length: 30 }, (_, i) => <TreeRow key={i} $odd={i % 2 === 0} />)}
      </TreeRows>
      <Scroll><Arrow /><Thumb $w={39} /><Arrow right /></Scroll>
    </TreeBox>
    <Splitter />
    <Fold>相关性<Vee /></Fold><Fold>细节<Vee /></Fold><Fold>预览<Vee /></Fold>
    <Scroll $h={17} $pl={6} $pr={5}><Arrow /><Thumb $w={110} /><Arrow right /></Scroll>
  </Panel>
);

const SideRail = () => (
  <Rail>
    <RailItem><I w={14}><circle cx="5.500" cy="7" r="4.500" stroke="#222" strokeWidth="1.500" /><path d="M5.500 0v2M5.500 12v2M-1.500 7h2M10.500 7h2M.8 2.200l1.300 1.300M9 10.500l1.300 1.300M10.300 2.200L9 3.500M.8 11.800l1.300-1.300" stroke="#222" strokeWidth="1.500" /></I></RailItem>
    <RailItem $mt={24}><I w={22} h={24}><YCube x={1} y={0} s={0.9} /><YCube x={4} y={4} s={0.9} /><path d="M4 14v10M4 18h6M13 12h9" stroke="#0a0a70" /><YCube x={12} y={16} s={0.9} /></I></RailItem>
    <RailItem $mt={15}><I w={22} h={24}><path d="M2 1l8 5-8 6zM18 1l-8 5 8 6z" fill="#1010c8" /><path d="M10.500 0v24" stroke={K} strokeDasharray="3 2" /><path d="M0 14h8v8H0z" fill="#ffee20" stroke="#333" strokeWidth="1" /><path d="M12 13l9 9h-9z" fill="#c80000" stroke="#500" strokeWidth=".6" /></I></RailItem>
    <RailItem $active $mt={8}><I w={22} h={24}><path d="M1 3h9v8H1z" fill="#c777b0" /><ellipse cx="5.500" cy="3" rx="4.500" ry="2" fill="#efc0e0" stroke="#8d3a78" strokeWidth=".8" /><path d="M1 3v8c1 2 8 2 9 0V3" stroke="#8d3a78" /><path d="M5 14v10M5 18h6" stroke="#0a0a70" /><path d="M13 10h9" stroke={K} /><circle cx="16" cy="19" r="4.500" stroke="#a03080" /><circle cx="16" cy="19" r="1.700" stroke="#a03080" /></I></RailItem>
    <RailItem $mt={6}><I w={23} h={22}>
      {[["#f5a040", "#a85a10", 0], ["#3cd63c", "#137a13", 6.5], ["#3c8ee6", "#124a9a", 13]].map(([a, b, x]) => <g key={x} transform={`translate(${x} 0)`}><path d="M0 6L5 0h5v14l-4.500 7H0z" fill={a} stroke={b} strokeWidth=".7" /><path d="M5.500 6v15M5.500 6L10 0M0 9h5.500M0 16h5.500" stroke={b} strokeWidth=".7" /><path d="M1 5.500L5.500 .6h4L5.500 5.500z" fill="#fff" /></g>)}
    </I></RailItem>
    <RailItem $mt={28}><I w={24}><path d="M8 1c9 0 14 6 15 14M8 5c6 0 10 4 11 10M8 9c4 0 6 2 7 6" stroke="#3a62b8" strokeWidth="2" /><circle cx="8" cy="16" r="7.500" fill="#1c86e0" stroke="#1556a8" /><path d="M7 11h3v2H7zM6 15h4v5h1.500v1.500h-6V20H7v-3.500H6z" fill="#fff" /></I></RailItem>
    <RailItem $mt={28}><I w={20} h={23}><path d="M1 1h12l5 5v16H1z" fill="#fff" stroke="#3a6cc0" strokeWidth="1.500" /><path d="M13 1v5h5" stroke="#3a6cc0" /><circle cx="10" cy="14" r="5.500" fill="#6fa8dc" /><path d="M6 11c2-3 4-3 5-2l3 6-4 4c-3 0-5-3-4-8z" fill="#1f8a2f" /></I></RailItem>
    <RailItem $mt={28}><I w={22}><circle cx="11" cy="11" r="10" fill="#e4f0fc" stroke="#6a6a6a" strokeWidth="2" /><circle cx="11" cy="11" r="7.500" stroke="#456" strokeDasharray="1 2.900" /><path d="M11 4v7h6" stroke={K} strokeWidth="1.500" /></I></RailItem>
    <RailItem $mt={15}><I w={20} h={22}><path d="M7 4l6-4 6 2-1 3-3-1-5 2z" fill="#666" stroke="#222" strokeWidth=".6" /><path d="M13 5L7 14" stroke="#eee" strokeWidth="3" /><path d="M12 4L6 14M14 6L8 15" stroke="#333" strokeWidth=".8" /><path d="M4 8l-1 4 3 4 8 5 3-2-7-6-2-4z" fill="#8c98a8" stroke="#333" strokeWidth=".6" /><path d="M1 18l5-2 4 3-5 3z" fill="#f08a20" /></I></RailItem>
  </Rail>
);

/* ---------- sketch ---------- */
const CX = 1072.3, CY = 624.5;
const rad = (d) => (d * Math.PI) / 180;
const facets = (cx, cy, r, n = 28) =>
  Array.from({ length: n }, (_, i) => `${(cx + r * Math.cos(rad((i * 360) / n))).toFixed(1)},${(cy + r * Math.sin(rad((i * 360) / n))).toFixed(1)}`).join(" ");
const arcPts = (cx, cy, r, p, q) => {
  const a = Math.atan2(p[1] - cy, p[0] - cx);
  let b = Math.atan2(q[1] - cy, q[0] - cx);
  if (b < a) b += 2 * Math.PI;
  const n = Math.round((b - a) / rad(8));
  return Array.from({ length: n + 1 }, (_, i) => {
    if (i === 0) return p.join();
    if (i === n) return q.join();
    const t = a + ((b - a) * i) / n;
    return `${(cx + r * Math.cos(t)).toFixed(1)},${(cy + r * Math.sin(t)).toFixed(1)}`;
  }).join(" ");
};
const holes = [[CX, 316, 72], [1380.8, CY, 61.7], [CX, 933, 92.5], [763.8, CY, 82.2]];
const blades = [
  [1118.4, 477.2, 239.5, [1052.5, 246.7], [1326.8, 594.5]],
  [1223.3, 656.2, 223, [1441.7, 612.3], [1116.6, 852]],
  [1057.2, 778.3, 248.5, [1081.3, 1025.3], [836.5, 663]],
  [920.5, 592, 242.7, [682.8, 641.3], [1037.5, 379.3]],
];
const tangents = [
  [1052.5, 246.7, 74], [1037.5, 379.3, 119], [1326.8, 594.5, 29], [1441.7, 612.3, -8],
  [1116.6, 852, -61], [1081.3, 1025.3, 84], [836.5, 663, 28], [682.8, 641.3, -8],
];
const pins = [[1117.7, 477.3], [921.3, 592.7], [1223.3, 656.7], [1056.7, 778.3], [CX, 316], [1380.8, CY], [CX, 933], [763.8, CY]];
const dims = [
  { x: 829, y: 435, x2: 910.5, y2: 498.5, c: 45.4, t: "p12:60.0" },
  { x: 838.7, y: 589, x2: 916, y2: 551.7, c: 28, t: "p17:16.0" },
  { x: 868.3, y: 819, x2: 960, y2: 731.7, c: 10.9, t: "p13:30.0", end: true },
  { x: 947.3, y: 793.3, x2: 1010, y2: 864, c: 10.9, t: "p14:18.0", end: true },
  { x: 1272.3, y: 721.7, x2: 1335, y2: 666, c: 10.9, t: "p15:12.0", end: true },
  { x: 1122.7, y: 369.3, x2: 1179, y2: 428, c: 23.5, t: "p16:14.0" },
];
const DimText = styled.text`
  font: 200 16px "DejaVu Sans", sans-serif;
  fill: ${C.dim};
  stroke: ${C.dim};
  stroke-width: 0.45;
`;
const Dim = ({ x, y, x2, y2, c, t, end }) => {
  const L = Math.hypot(x2 - x, y2 - y);
  const a = (Math.atan2(y2 - y, x2 - x) * 180) / Math.PI;
  return (
    <g transform={`translate(${x} ${y}) rotate(${a})`}>
      <path d={`M0 0H${L}`} stroke={C.dim} strokeWidth="1" />
      <path d={end ? `M${L} 0l-10-2.500v5z` : "M0 0l10-2.500v5z"} fill={C.dim} />
      <circle cx={c} cy="-11" r="5.300" stroke={C.dim} strokeWidth="1" />
      <path d={`M${c - 5} -3L${c + 5} -19`} stroke={C.dim} strokeWidth="1" />
      <DimText x={c + 11} y="-5" textLength="49" lengthAdjust="spacingAndGlyphs">{t}</DimText>
    </g>
  );
};
const DASH = "16 3.500 3 3 3 3.500";

const Sketch = () => (
  <Draw width="1723" height="854" viewBox="195 203 1723 854">
    <path d="M1030.500 583h84v84h-84z" fill="#a8b7c4" stroke="#0096ff" strokeWidth="1.500" />
    <path d="M1072 557.500h67.500V622" stroke="#0a0ae0" strokeWidth="1" />
    <path d={`M${CX} 545l4.500 17h-9zM${CX - 2} 561h4v62h-4z`} fill="#3a9a3a" />
    <path d={`M1153 ${CY}l-18 4.500v-9zM1075 ${CY - 2}h61v4h-61z`} fill="#e23c3c" />
    <g stroke={C.khaki} strokeWidth="2" strokeDasharray={DASH}>
      <circle cx={CX} cy={CY} r="308.400" strokeDashoffset="8" />
      <circle cx={CX} cy={CY} r="154.200" strokeDashoffset="8" />
      <path d={`M630 ${CY}H1483M${CX} 214V1047`} />
    </g>
    <g stroke="#00a000" strokeWidth="1.300">
      <path d={`M${CX} 331V545`} strokeDasharray="3 20 3 6" />
      <path d={`M1222 ${CY}H1376`} strokeDasharray="4 10 4 14" />
    </g>
    <g fill={C.khaki}><circle cx="629.800" cy={CY} r="2.800" /><circle cx="1483.300" cy={CY} r="2.800" /><circle cx={CX} cy="213.500" r="2.800" /><circle cx={CX} cy="1046.500" r="2.800" /></g>
    <g stroke={C.dim} strokeWidth="1.400">
      <path d="M1068.300 491v18.500M1076.400 491v18.500M1068.300 598v19M1076.400 598v19M1025 620.500h18M1025 629h18M1188 620.500h18M1188 629h18" />
      <path d="M1047 624.500h20M1072.300 629v11" strokeWidth="3.500" strokeOpacity=".75" />
      <circle cx={CX} cy={CY} r="5.500" />
    </g>
    <path d={`M${CX} 486V530M1156 ${CY}H1206`} stroke="#0050ff" strokeDasharray="5 6" strokeWidth="1.400" />
    <path d={`M1069.500 509l2.800-12 2.800 12M1190 621.500l9 3-9 3zM1069 479.500l3.300 3.500 3.300-3.500M1209 620l7 9M1216 620l-7 9`} stroke="#0000ff" strokeWidth="1.200" />
    <path d="M1069 530l3.300 3.500 3.300-3.500" stroke="#3a9a3a" />
    <path d="M1158.500 620l7 9M1165.500 620l-7 9" stroke="#d02020" strokeWidth="1.100" />
    <circle cx={CX} cy={CY} r="4" fill={C.khaki} />
    <g stroke={C.line} strokeWidth="1.550">
      {holes.map(([x, y, r], i) => <polygon key={i} points={facets(x, y, r)} />)}
      {blades.map((b, i) => <polyline key={i} points={arcPts(...b)} />)}
    </g>
    {tangents.map(([x, y, a], i) => (
      <g key={i} transform={`translate(${x} ${y}) rotate(${a})`} stroke={C.dim}>
        <circle r="5.500" strokeWidth="1" /><path d="M-11.500 0h23" strokeWidth="1.300" /><circle r="2.900" fill={C.line} stroke="none" />
      </g>
    ))}
    {pins.map(([x, y], i) => <g key={i}><circle cx={x} cy={y} r="5.500" stroke={C.dim} strokeWidth="1.300" /><circle cx={x} cy={y} r="2.700" fill="#1010f0" /><path d={`M${x - 3} ${y}h6`} stroke={C.khaki} strokeWidth="1" /></g>)}
    {dims.map((d) => <Dim key={d.t} {...d} />)}
    <path d="M263 961h27v27" stroke="#bbb" />
    <path d="M263 943l3.500 11h-7zM261.500 953h3v33h-3z" fill="#3a9a3a" />
    <path d="M260 932l3 4 3-4M263 936v5" stroke="#3a9a3a" strokeWidth="1" />
    <path d="M267 987.200h25l16 1.300-16 1.300h-25z" fill="#d83030" />
    <path d="M313.500 984.500l4 7M317.500 984.500l-4 7" stroke="#d83030" strokeWidth="1" />
    <circle cx="263" cy="988.500" r="3.200" fill="#1428e0" />
  </Draw>
);

export default function App() {
  return (
    <Window>
      <Global />
      <Main>
        <SaveRow />
        <TabRow />
        <RibbonRow />
        <SelectionBar />
        <Work>
          <SideRail />
          <Navigator />
          <View>
            <DocTabs>
              <DocTab>
                <I w={14}><path d="M1 3l4-3 3 1v6l5-1 1 4-7 4-6-3z" fill="#2a5fd8" stroke="#123a9c" strokeWidth=".8" /><path d="M1 3l3 1 4-3" stroke="#a8c6ff" /></I>
                _model8.prt
                <I w={9}><path d="M1 1l7 7M8 1L1 8" stroke="#b8b8b8" strokeWidth="2" /></I>
              </DocTab>
            </DocTabs>
            <Canvas><Sketch /></Canvas>
          </View>
        </Work>
        <Status>草图需要 4 个约束<StatusIcons><Flag w={13} /><Frame w={15} /></StatusIcons></Status>
      </Main>
      <Edge />
      <Lyric $x={55} $y={946} $wt={500} $sx={0.96} $c="#00c3f3" $s="#176b82">and everything you do</Lyric>
      <Lyric $x={1317} $y={1012} $wt={400} $sx={0.95} $c="#dcdcdc" $s="#808080">yeah they were all yellow</Lyric>
    </Window>
  );
}
